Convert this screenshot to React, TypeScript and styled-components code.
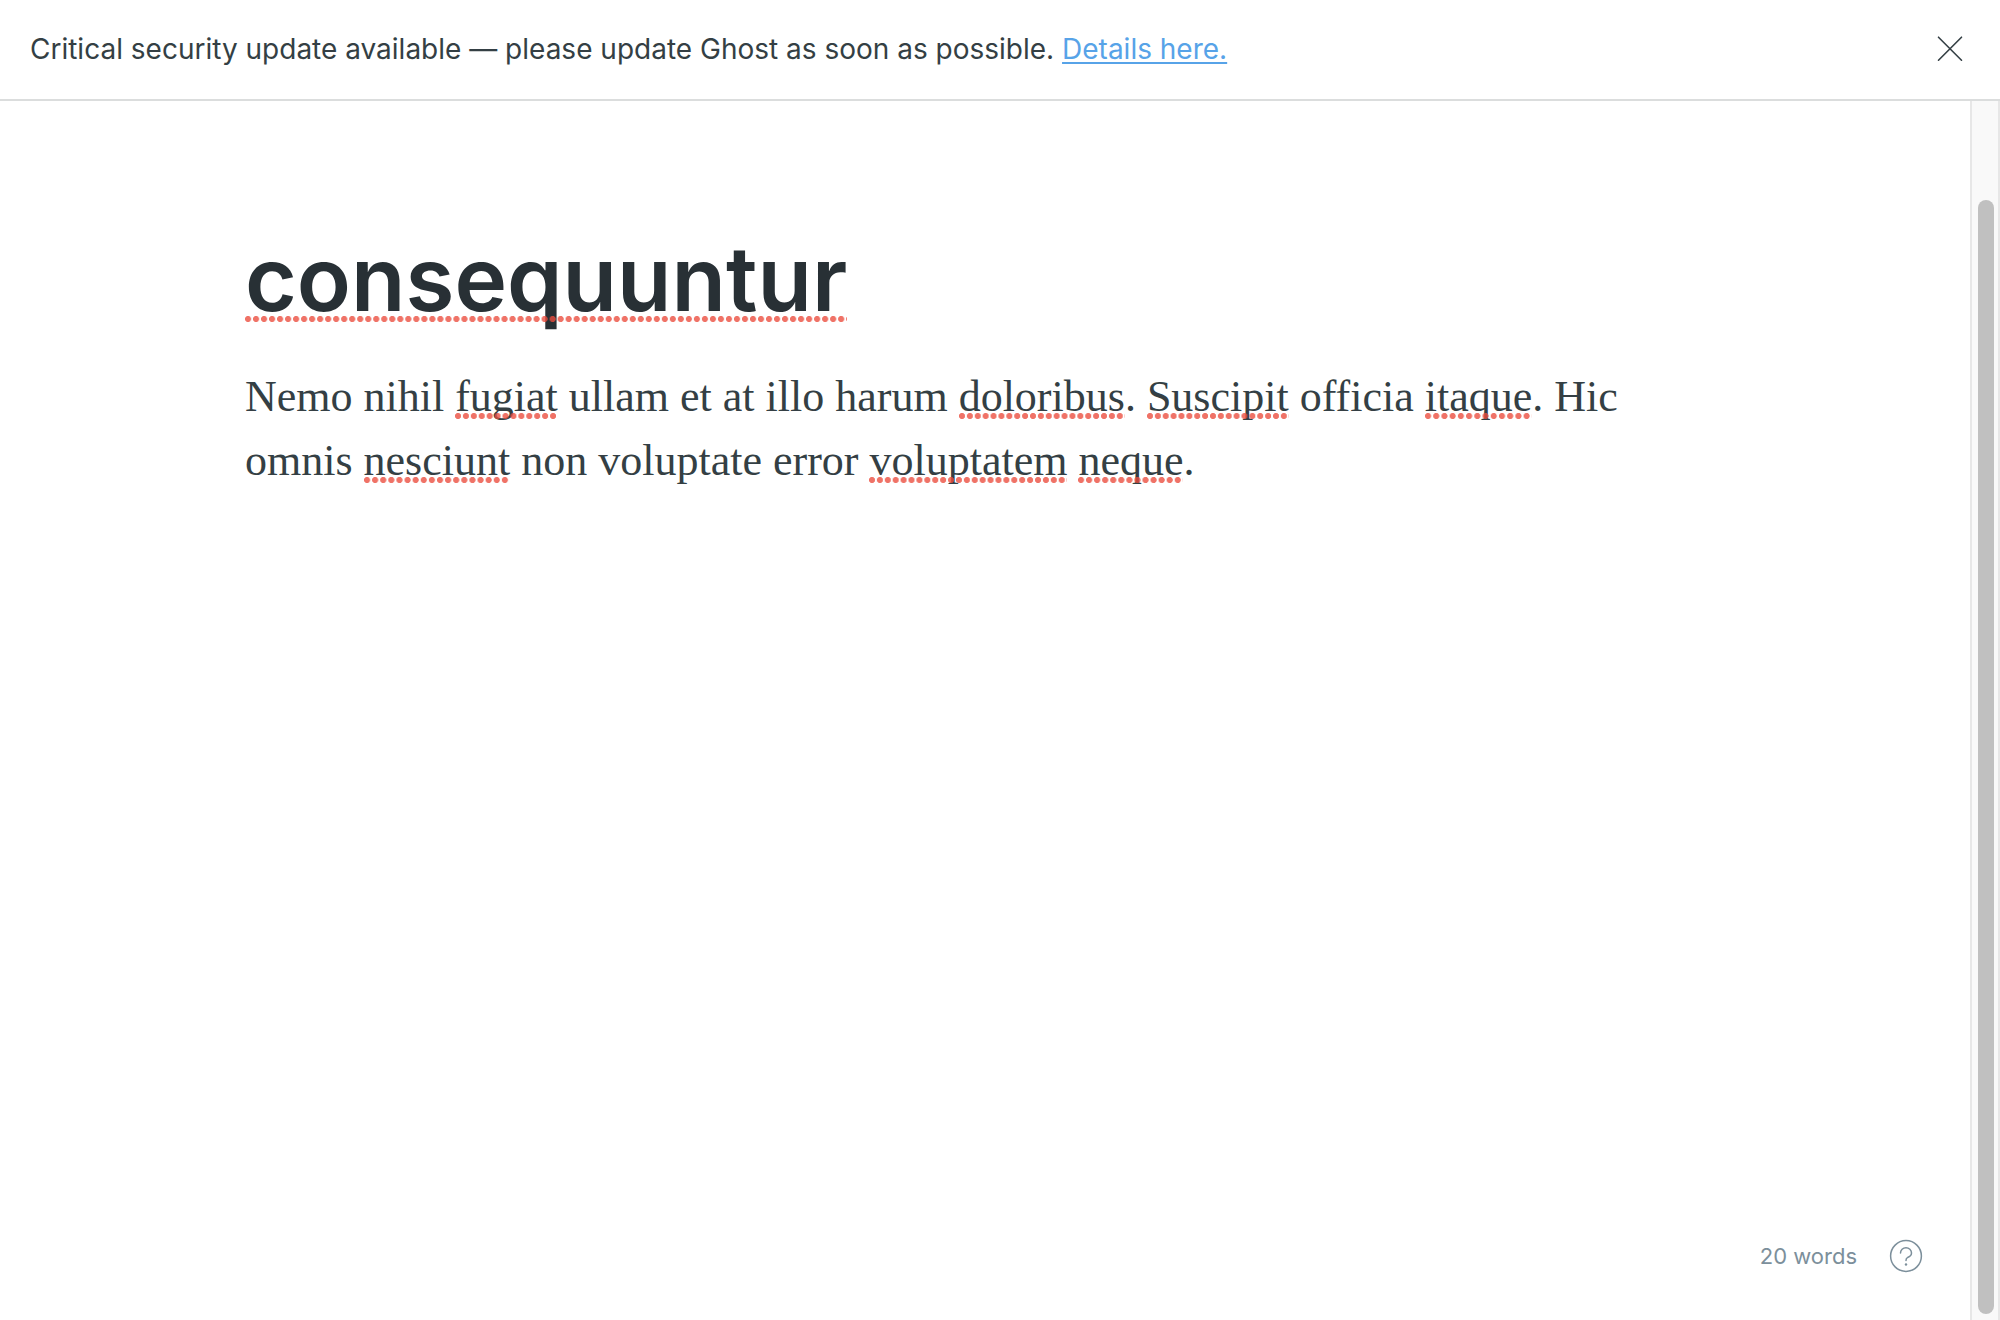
import React from 'react';
import styled, { createGlobalStyle } from 'styled-components';

const sans = `Inter, "Open Sans", "Liberation Sans", sans-serif`;
const serif = `Georgia, "Liberation Serif", serif`;

const GlobalStyle = createGlobalStyle`
  *, *::before, *::after { box-sizing: border-box; }
  body { margin: 0; background: #fff; }
`;

const Page = styled.div`
  display: flex;
  flex-direction: column;
  height: 100vh;
  background: #fff;
  color: #343f44;
`;

const Notice = styled.header`
  display: flex;
  align-items: center;
  justify-content: space-between;
  padding: 28px 36px 28px 30px;
  border-bottom: 2px solid #dbdddd;
  font-family: ${sans};
  font-size: 28px;
  line-height: 43px;
`;

const NoticeText = styled.p`
  margin: 0;
`;

const NoticeLink = styled.a`
  color: #57a3e8;
  text-decoration: underline;
  text-decoration-thickness: 2px;
  text-underline-offset: 3px;
  text-decoration-skip-ink: none;
`;

const IconButton = styled.button`
  display: flex;
  padding: 0;
  border: 0;
  background: none;
  color: inherit;
  cursor: pointer;
`;

const Workspace = styled.div`
  display: flex;
  flex: 1;
  min-height: 0;
`;

const Editor = styled.main`
  display: flex;
  flex: 1;
  flex-direction: column;
  padding: 122px 47px 47px 0;
`;

const Article = styled.article`
  flex: 1;
  padding: 0 198px 0 245px;
`;

const Title = styled.h1`
  margin: 0 0 30px;
  color: #283035;
  font-family: ${sans};
  font-size: 89px;
  font-weight: 600;
  line-height: 112px;
`;

const Body = styled.p`
  margin: 0;
  font-family: ${serif};
  font-size: 44px;
  line-height: 64px;
`;

const Misspelled = styled.span<{ $drop: number }>`
  position: relative;

  &::after {
    content: '';
    position: absolute;
    left: 0;
    right: 0;
    bottom: ${({ $drop }) => $drop}px;
    height: 6px;
    background: radial-gradient(circle at 3px 3px, rgba(235, 75, 60, 0.78) 2.7px, transparent 3.4px) 0 0 / 8px 6px round no-repeat;
    background-repeat: round no-repeat;
  }
`;

const StatusBar = styled.footer`
  display: flex;
  align-items: center;
  justify-content: flex-end;
  gap: 32px;
  color: #7c8f9b;
  font-family: ${sans};
  font-size: 22px;
  line-height: 32px;
`;

const Track = styled.div`
  display: flex;
  width: 30px;
  padding: 99px 4px 6px 6px;
  border: solid #e7e7e7;
  border-width: 0 2px;
  background: #f9f9f9;
`;

const Thumb = styled.div`
  flex: 1;
  border-radius: 8px;
  background: #c0c0c0;
`;

const paragraph: { text: string; flagged?: boolean }[] = [
  { text: 'Nemo nihil ' },
  { text: 'fugiat', flagged: true },
  { text: ' ullam et at illo harum ' },
  { text: 'doloribus', flagged: true },
  { text: '. ' },
  { text: 'Suscipit', flagged: true },
  { text: ' officia ' },
  { text: 'itaque', flagged: true },
  { text: '. Hic omnis ' },
  { text: 'nesciunt', flagged: true },
  { text: ' non voluptate error ' },
  { text: 'voluptatem', flagged: true },
  { text: ' ' },
  { text: 'neque', flagged: true },
  { text: '.' },
];

export default function App() {
  return (
    <>
      <GlobalStyle />
      <Page>
        <Notice>
          <NoticeText>
            Critical security update available — please update Ghost as soon as possible.{' '}
            <NoticeLink href="#details">Details here.</NoticeLink>
          </NoticeText>
          <IconButton type="button" aria-label="Dismiss">
            <svg width="28" height="28" viewBox="0 0 28 28" fill="none" stroke="currentColor" strokeWidth="1.6" strokeLinecap="round">
              <path d="M2.5 1.2 25.5 24.2M25.5 1.2 2.5 24.2" />
            </svg>
          </IconButton>
        </Notice>
        <Workspace>
          <Editor>
            <Article>
              <Title>
                <Misspelled $drop={10}>consequuntur</Misspelled>
              </Title>
              <Body>
                {paragraph.map(({ text, flagged }, index) =>
                  flagged ? (
                    <Misspelled key={index} $drop={2}>
                      {text}
                    </Misspelled>
                  ) : (
                    <React.Fragment key={index}>{text}</React.Fragment>
                  ),
                )}
              </Body>
            </Article>
            <StatusBar>
              <span>20 words</span>
              <IconButton type="button" aria-label="Help">
                <svg width="34" height="34" viewBox="0 0 34 34" fill="none" stroke="currentColor" strokeWidth="1.5" strokeLinecap="round">
                  <circle cx="17" cy="17" r="15.4" />
                  <path d="M11.5 14a5.5 5.2 0 1 1 11 0c0 3-2.3 3.9-4 4.6-1.2.5-1.5 1-1.5 2.9" />
                  <circle cx="17" cy="25.5" r="1.2" fill="currentColor" stroke="none" />
                </svg>
              </IconButton>
            </StatusBar>
          </Editor>
          <Track>
            <Thumb />
          </Track>
        </Workspace>
      </Page>
    </>
  );
}
